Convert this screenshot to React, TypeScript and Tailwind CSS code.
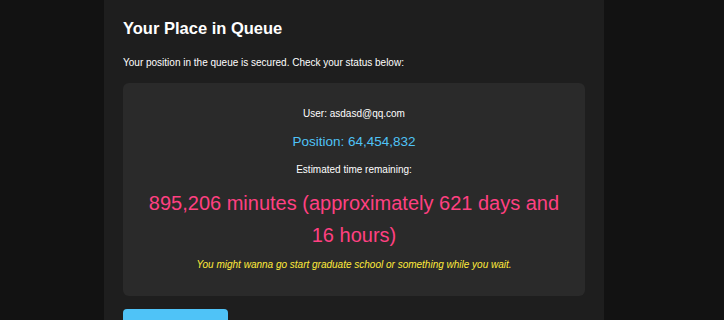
import React from "react";

const App = () => {
  return (
    <div className="flex min-h-screen justify-center bg-[#121212] pr-4 font-['Liberation_Sans',Arial,sans-serif]">
      <div className="w-[500px] min-h-screen bg-[#1e1e1e] px-[19px] pt-[18px] pb-8">
        <h2 className="text-[16.5px] font-bold leading-[20px] text-white">Your Place in Queue</h2>
        <p className="mt-[19px] text-[10px] leading-[12px] text-white">
          Your position in the queue is secured. Check your status below:
        </p>

        {/* status box */}
        <div className="mt-[14px] rounded-md bg-[#2a2a2a] px-4 pt-[25px] pb-[25px] text-center">
          <p className="text-[10px] leading-[12px] text-white">User: asdasd@qq.com</p>
          <p className="mt-[14px] text-[13.5px] leading-[16px] text-[#4fc3f7]">Position: 64,454,832</p>
          <p className="mt-[14px] text-[10px] leading-[12px] text-white">Estimated time remaining:</p>
          <p className="mt-[11px] text-[20px] leading-[32px] text-[#ff4081]">
            895,206 minutes (approximately 621 days and 16 hours)
          </p>
          <p className="mt-[8px] text-[10px] italic leading-[12px] text-[#ffeb3b]">
            You might wanna go start graduate school or something while you wait.
          </p>
        </div>

        <button className="mt-[13px] w-[105px] rounded-[4px] bg-[#4fc3f7] py-[9px] text-[11px] font-bold leading-[14px] text-[#1e1e1e]">
          Refresh Status
        </button>
      </div>
    </div>
  );
};

export default App;
